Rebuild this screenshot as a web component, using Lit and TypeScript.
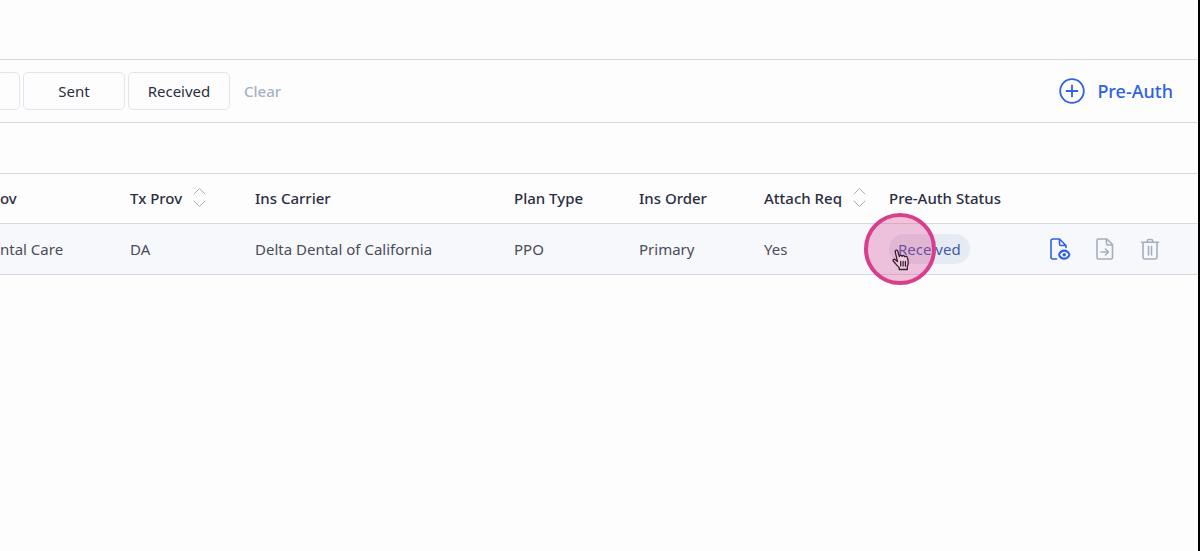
import { LitElement, html, css, svg } from "lit";
import { customElement } from "lit/decorators.js";

interface Column {
  label: string;
  value: string;
  sortable?: boolean;
}

const COLUMNS: Column[] = [
  { label: "ov", value: "ntal Care" },
  { label: "Tx Prov", value: "DA", sortable: true },
  { label: "Ins Carrier", value: "Delta Dental of California" },
  { label: "Plan Type", value: "PPO" },
  { label: "Ins Order", value: "Primary" },
  { label: "Attach Req", value: "Yes", sortable: true },
];

const sortIcon = svg`<path d="M1 7 6.500 1.500 12 7M1 14l5.500 5.500L12 14"/>`;

@customElement("app-root")
export class AppRoot extends LitElement {
  static styles = css`
    :host {
      display: block;
      box-sizing: border-box;
      min-height: 100vh;
      padding-top: 59px;
      overflow: hidden;
      border-right: 2px solid #000;
      background: #fdfdfd;
      color: #2b2e3f;
      font: 15px/20px "Noto Sans", sans-serif;
    }
    button {
      margin: 0;
      padding: 0;
      border: 0;
      background: none;
      color: inherit;
      font: inherit;
      cursor: pointer;
    }
    svg {
      display: block;
      fill: none;
      stroke: currentColor;
      stroke-linecap: round;
      stroke-linejoin: round;
    }
    .toolbar {
      display: flex;
      align-items: center;
      justify-content: space-between;
      box-sizing: border-box;
      height: 64px;
      padding-right: 25px;
      border: 1px solid #d3dae2;
      border-width: 1px 0;
    }
    .filters {
      display: flex;
      align-items: center;
      gap: 3px;
      margin-left: -82px;
    }
    .filter {
      box-sizing: border-box;
      width: 102px;
      height: 38px;
      border: 1px solid #e1e6ee;
      border-radius: 5px;
    }
    .clear {
      margin-left: 11px;
      color: #a6b1c4;
      font-weight: 500;
    }
    .add {
      display: flex;
      align-items: center;
      gap: 12px;
      color: #2f62e4;
      font-size: 18px;
      font-weight: 500;
    }
    table {
      width: 100%;
      margin-top: 50px;
      border-collapse: separate;
      border-spacing: 0;
      table-layout: fixed;
      border-top: 1px solid #d3dae2;
    }
    .narrow {
      width: 125px;
    }
    .first {
      width: 130px;
    }
    .wide {
      width: 259px;
    }
    th,
    td {
      box-sizing: border-box;
      padding: 0;
      border-bottom: 1px solid #d5dae1;
      text-align: left;
      white-space: nowrap;
    }
    th {
      height: 50px;
      padding-bottom: 2px;
      font-weight: 500;
    }
    td {
      height: 51px;
      background: #f7f8fc;
      color: #4a4c57;
    }
    .head {
      display: flex;
      align-items: center;
      gap: 11px;
    }
    .sort {
      color: #a9aeb7;
    }
    .status {
      position: relative;
      display: inline-block;
      padding: 5px 9px;
      border-radius: 15px;
      background: #e6eaf3;
      color: #3f5aa8;
    }
    .spot {
      position: absolute;
      top: -21px;
      left: -25px;
      box-sizing: border-box;
      width: 72px;
      height: 72px;
      border: 4px solid #d73f8d;
      border-radius: 50%;
      background: rgba(215, 63, 141, 0.3);
      pointer-events: none;
    }
    .hand {
      position: absolute;
      top: 32px;
      left: 24px;
      color: #33202f;
    }
    .actions {
      display: flex;
      justify-content: flex-end;
      gap: 21px;
      padding-right: 36px;
      color: #a3afbd;
    }
    .view {
      color: #2f62e4;
    }
  `;

  render() {
    return html`
      <div class="toolbar">
        <div class="filters">
          <button class="filter" aria-label="All"></button>
          <button class="filter">Sent</button>
          <button class="filter">Received</button>
          <button class="clear">Clear</button>
        </div>
        <button class="add">
          <svg width="26" height="26" viewBox="0 0 26 26" stroke-width="1.800">
            <circle cx="13" cy="13" r="11.800" />
            <path d="M7.500 13h11M13 7.500v11" />
          </svg>
          Pre-Auth
        </button>
      </div>
      <table>
        <colgroup>
          <col class="first" />
          <col class="narrow" />
          <col class="wide" />
          <col class="narrow" />
          <col class="narrow" />
          <col class="narrow" />
          <col />
          <col />
        </colgroup>
        <thead>
          <tr>
            ${COLUMNS.map(
              (c) => html`<th scope="col">
                <div class="head">
                  ${c.label}
                  ${c.sortable
                    ? html`<button class="sort" aria-label="Sort by ${c.label}">
                        <svg width="13" height="21" viewBox="0 0 13 21">${sortIcon}</svg>
                      </button>`
                    : null}
                </div>
              </th>`
            )}
            <th scope="col">Pre-Auth Status</th>
            <th></th>
          </tr>
        </thead>
        <tbody>
          <tr>
            ${COLUMNS.map((c) => html`<td>${c.value}</td>`)}
            <td>
              <span class="status"
                >Received<span class="spot">
                  <svg class="hand" width="18" height="22" viewBox="0 0 18 22" stroke-width="1.300">
                    <path
                      fill="#f3c9de"
                      d="M5.500 12.500 3.300 3.200C2.800 1 5.300.400 5.900 2.500L7.300 7.600C7.800 6 9.600 6 10.100 7.300 10.700 6.100 12.400 6.300 12.800 7.700 13.700 6.900 15.200 7.300 15.500 8.900 16.200 11.700 17 14.500 15.300 17.400V20.500H7.200V18.700C5.400 17 3.900 14.700 1.600 12.600.300 11.200 1.800 9.600 3.300 10.700Z"
                    />
                    <path d="M8.700 12.500v4.500M11.100 12.500v4.500M13.400 12.500v4.500" />
                  </svg> </span
              ></span>
            </td>
            <td>
              <div class="actions">
                <button class="view" aria-label="View pre-auth">
                  <svg width="24" height="24" viewBox="0 0 24 24" stroke-width="1.600">
                    <path d="M8.500 22H5a2 2 0 0 1-2-2V4a2 2 0 0 1 2-2h6.500l6.500 6.500v2M11.500 2v5a1.500 1.500 0 0 0 1.500 1.500h5" />
                    <path fill="currentColor" stroke="none" d="M10 17.700c1.500-7 10.500-7 12.500 0-2 6.800-11 6.800-12.500 0Z" />
                    <path fill="#f7f8fc" stroke="none" d="M12 17.700c2.500-3.800 6-3.800 8.500 0-2.500 3.800-6 3.800-8.500 0Z" />
                    <circle cx="16.250" cy="17.700" r="1.700" fill="currentColor" stroke="none" />
                  </svg>
                </button>
                <button aria-label="Send pre-auth">
                  <svg width="24" height="24" viewBox="0 0 24 24" stroke-width="1.600">
                    <path d="M5.500 2h8.500l5.500 5.500v13a1.500 1.500 0 0 1-1.500 1.500H5.500A1.500 1.500 0 0 1 4 20.500V3.500A1.500 1.500 0 0 1 5.500 2ZM13.500 2v4.500A1.500 1.500 0 0 0 15 8h4.500M8 15h7.500M12.500 12l3 3-3 3" />
                  </svg>
                </button>
                <button aria-label="Delete pre-auth">
                  <svg width="24" height="24" viewBox="0 0 24 24" stroke-width="1.600">
                    <path d="M3.500 5.300h17M5 5.300V20a2 2 0 0 0 2 2h10a2 2 0 0 0 2-2V5.300M9.300 5.300V4A1.500 1.500 0 0 1 10.800 2.500h2.400A1.500 1.500 0 0 1 14.700 4v1.300M10.500 9.500v8.500M13.500 9.500v8.500" />
                  </svg>
                </button>
              </div>
            </td>
          </tr>
        </tbody>
      </table>
    `;
  }
}
